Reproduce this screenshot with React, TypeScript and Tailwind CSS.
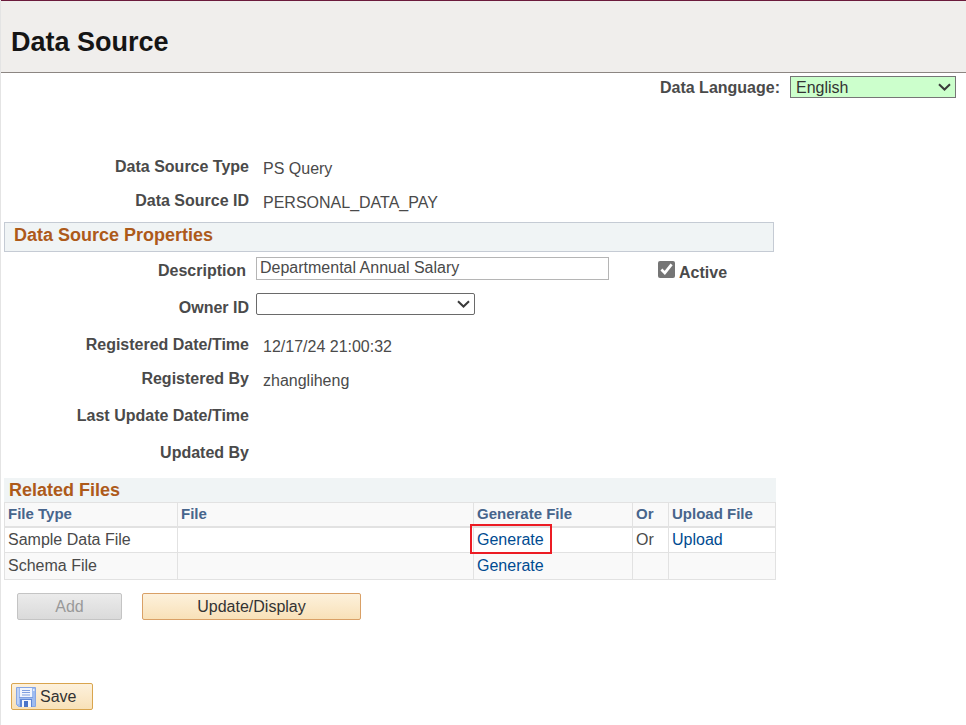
import { useState, type ReactNode } from "react";

function Chevron() {
  return (
    <svg
      className="pointer-events-none absolute top-1/2 right-[5px] -translate-y-1/2"
      width="13"
      height="8"
      viewBox="0 0 13 8"
      fill="none"
      stroke="#3a3a3a"
      strokeWidth="2"
      aria-hidden="true"
    >
      <path d="M1 1.2l5.5 5.3L12 1.2" />
    </svg>
  );
}

function FloppyIcon() {
  return (
    <svg width="20" height="20" viewBox="0 0 20 20" aria-hidden="true">
      <path d="M0.5 0.5h19v19H2.5l-2-2z" fill="#9dbbf0" stroke="#86a6e4" />
      <path d="M1 1h2v16H1z" fill="#bdd1f6" />
      <path d="M4 1h12v9H4z" fill="#f1f5fd" />
      <path d="M6 3.5h8M6 5.5h8M6 8h8" stroke="#7f9fdf" strokeWidth="1.2" />
      <path d="M17 2h1.5v2H17z" fill="#e4edff" />
      <path d="M3 10.5h14" stroke="#7f9fdf" />
      <path d="M4 12h12v8H4z" fill="#5f87d6" />
      <path d="M6 13h9v7H6z" fill="#f4f7fe" />
      <path d="M8 14h4v6H8z" fill="#4a74c8" />
    </svg>
  );
}

function InfoRow({ label, children }: { label: string; children?: ReactNode }) {
  return (
    <div className="flex h-[34px] items-center">
      <dt className="w-[248px] shrink-0 text-right font-bold">{label}</dt>
      <dd className="pt-[3px] pl-[14px]">{children}</dd>
    </div>
  );
}

const cell = "border border-[#e2e2e2] px-[3px] text-left";
const link = "text-[#004b91] hover:underline";

export default function App() {
  const [description, setDescription] = useState("Departmental Annual Salary");
  const [active, setActive] = useState(true);

  return (
    <div className="min-h-screen border-l border-[#e4e4e4] bg-white font-['Liberation_Sans',Arial,sans-serif] text-base leading-5 text-[#4a4a4a]">
      <header className="flex h-[73px] items-center border-t border-b border-t-[#6b1a3b] border-b-[#8c8682] bg-[#f0eeec] px-[10px]">
        <h1 className="pt-[10px] text-[27px] leading-8 font-bold text-[#151515]">Data Source</h1>
      </header>

      <div className="flex items-center justify-end gap-[10px] pt-[3px] pr-[10px]">
        <label htmlFor="language" className="pt-[2px] font-bold">
          Data Language:
        </label>
        <div className="relative w-[166px]">
          <select
            id="language"
            className="block h-[22px] w-full appearance-none border border-[#767676] bg-[#ccffcc] pt-px pl-[5px] text-[#333]"
          >
            <option>English</option>
          </select>
          <Chevron />
        </div>
      </div>

      <main className="pt-[52px]">
        <dl>
          <InfoRow label="Data Source Type">PS Query</InfoRow>
          <InfoRow label="Data Source ID">PERSONAL_DATA_PAY</InfoRow>
        </dl>

        <h2 className="mt-1 ml-[3px] h-[30px] w-full max-w-[770px] border border-[#c5cbd4] bg-[#f0f4f5] pt-[2px] pl-[9px] text-lg leading-5 font-bold text-[#ad5a1a]">
          Data Source Properties
        </h2>

        <div className="flex h-9 items-center">
          <label htmlFor="description" className="w-[248px] shrink-0 pt-[2px] pr-[3px] text-right font-bold">
            Description
          </label>
          <input
            id="description"
            type="text"
            value={description}
            onChange={(e) => setDescription(e.target.value)}
            className="mb-1 ml-[7px] h-[23px] w-[353px] border border-[#b5b5b5] px-[3px]"
          />
          <label className="ml-[49px] flex items-center gap-1 font-bold">
            <input
              type="checkbox"
              checked={active}
              onChange={(e) => setActive(e.target.checked)}
              className="mb-[2px] size-[17px] accent-[#757575]"
            />
            <span className="pt-[5px]">Active</span>
          </label>
        </div>

        <div className="flex h-9 items-center">
          <label htmlFor="owner" className="w-[248px] shrink-0 pt-[3px] text-right font-bold">
            Owner ID
          </label>
          <div className="relative mb-1 ml-[7px] w-[219px]">
            <select
              id="owner"
              className="block h-[22px] w-full appearance-none rounded-[2px] border border-[#6a6a6a] bg-white pl-1"
            >
              <option></option>
            </select>
            <Chevron />
          </div>
        </div>

        <dl className="pt-1">
          <InfoRow label="Registered Date/Time">12/17/24 21:00:32</InfoRow>
          <InfoRow label="Registered By">zhangliheng</InfoRow>
        </dl>
        <dl className="flex flex-col gap-[3px] pt-[3px]">
          <InfoRow label="Last Update Date/Time" />
          <InfoRow label="Updated By" />
        </dl>

        <table className="mt-2 ml-[3px] w-full max-w-[772px] table-fixed border-collapse">
          <caption className="h-6 bg-[#f0f4f5] pl-[5px] text-left text-lg leading-6 font-bold text-[#ad5a1a]">
            Related Files
          </caption>
          <colgroup>
            <col className="w-[173px]" />
            <col />
            <col className="w-[159px]" />
            <col className="w-[36px]" />
            <col className="w-[107px]" />
          </colgroup>
          <thead>
            <tr className="h-6 border-b-2 border-[#e2e2e2] bg-[#f9f9f9] text-[15px] leading-5 text-[#47658c]">
              <th className={cell}>File Type</th>
              <th className={cell}>File</th>
              <th className={cell}>Generate File</th>
              <th className={cell}>Or</th>
              <th className={cell}>Upload File</th>
            </tr>
          </thead>
          <tbody>
            <tr className="h-[26px]">
              <td className={cell}>Sample Data File</td>
              <td className={cell}></td>
              <td className={cell}>
                <a href="#generate-sample" className={`relative ${link}`}>
                  Generate
                  <span className="absolute -top-[7px] -right-2 -bottom-[6px] -left-[7px] border-2 border-[#ec1c24]" />
                </a>
              </td>
              <td className={cell}>Or</td>
              <td className={cell}>
                <a href="#upload-sample" className={link}>
                  Upload
                </a>
              </td>
            </tr>
            <tr className="h-[27px] bg-[#f9f9f9]">
              <td className={cell}>Schema File</td>
              <td className={cell}></td>
              <td className={cell}>
                <a href="#generate-schema" className={link}>
                  Generate
                </a>
              </td>
              <td className={cell}></td>
              <td className={cell}></td>
            </tr>
          </tbody>
        </table>

        <div className="mt-[13px] ml-4 flex gap-5">
          <button
            type="button"
            disabled
            className="h-[27px] w-[105px] rounded-[2px] border border-[#c4c4c4] bg-linear-to-b from-[#ebebeb] to-[#dadada] text-[#999]"
          >
            Add
          </button>
          <button
            type="button"
            className="h-[27px] w-[219px] rounded-[2px] border border-[#d9a066] bg-linear-to-b from-[#fdf1dc] to-[#f8e1b8] text-[#333]"
          >
            Update/Display
          </button>
        </div>

        <button
          type="button"
          className="mt-[63px] ml-[10px] flex h-[27px] w-[82px] items-center gap-1 rounded-[2px] border border-[#d9a54e] bg-linear-to-b from-[#fdf1dc] to-[#f8e1b8] pl-1 text-[#333]"
        >
          <FloppyIcon />
          Save
        </button>
      </main>
    </div>
  );
}
